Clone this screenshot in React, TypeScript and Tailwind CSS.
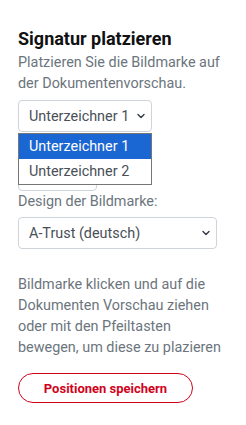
import React from 'react';

function Chevron() {
  return (
    <svg width="10" height="8" viewBox="0 0 16 16" className="pointer-events-none">
      <path d="M2 5l6 6 6-6" fill="none" stroke="#343a40" strokeWidth="2.8" strokeLinecap="round" strokeLinejoin="round" />
    </svg>
  );
}

export default function App() {
  return (
    <div className="min-h-[425px] w-[246px] bg-white px-[18px] pt-[28px] text-[14.4px] leading-[21px] text-[#6c757d]" style={{ fontFamily: 'Roboto, "Liberation Sans", sans-serif' }}>
      <h2 className="text-[18px] font-bold leading-[22px] text-[#111]">Signatur platzieren</h2>
      <p className="mt-[2px]">Platzieren Sie die Bildmarke auf der Dokumentenvorschau.</p>

      <div className="relative mt-[6px] w-[134px]">
        <div className="flex h-[32px] items-center justify-between rounded-[4px] border border-[#ced4da] pl-[10px] pr-[5px] text-[#495057]">
          <span>Unterzeichner 1</span>
          <Chevron />
        </div>
        <div className="absolute left-0 top-[33px] z-10 w-[134px] border border-[#767676] bg-white">
          <div className="flex h-[25px] items-center bg-[#1a66d2] pl-[10px] text-white">Unterzeichner 1</div>
          <div className="flex h-[25px] items-center pl-[10px] text-[#495057]">Unterzeichner 2</div>
        </div>
      </div>

      <div className="mt-[26px] h-[33px] w-[79px] rounded-[4px] border border-[#ced4da]" />

      <label className="block">Design der Bildmarke:</label>
      <div className="mt-[5px] flex h-[32px] w-[199px] items-center justify-between rounded-[4px] border border-[#ced4da] pl-[10px] pr-[5px] text-[#495057]">
        <span>A-Trust (deutsch)</span>
        <Chevron />
      </div>

      <p className="mt-[25px]">Bildmarke klicken und auf die Dokumenten Vorschau ziehen oder mit den Pfeiltasten bewegen, um diese zu plazieren</p>

      <button className="mt-[15px] flex h-[30px] w-[175px] items-center justify-center rounded-full border border-[#d0021b] text-[13px] font-bold text-[#d0021b]">
        Positionen speichern
      </button>
    </div>
  );
}
